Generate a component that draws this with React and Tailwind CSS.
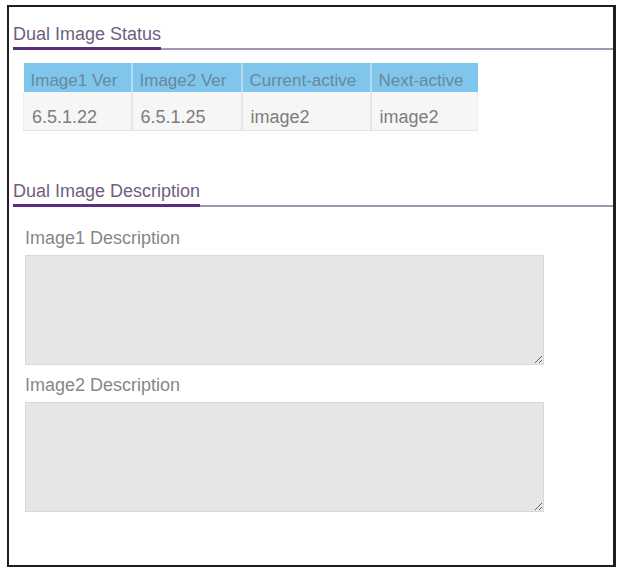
import React from 'react';

const font = { fontFamily: '"Liberation Sans", Arial, sans-serif' };

function SectionTitle({ title, className }) {
  return (
    <div className={`ml-[4px] flex border-b-2 border-[#a396b0] ${className}`}>
      <span className="-mb-[2px] border-b-[3px] border-[#5a2d80] pb-[3px] text-[18px] leading-[20px] text-[#6f6080]">
        {title}
      </span>
    </div>
  );
}

function Description({ label, className }) {
  return (
    <div className={className}>
      <p className="ml-[16px] text-[18px] leading-[20px] text-[#878787]">{label}</p>
      <textarea
        className="ml-[16px] mt-[7px] block h-[110px] w-[519px] border border-[#d9d9d9] bg-[#e6e6e6] outline-none"
        defaultValue=""
      />
    </div>
  );
}

export default function App() {
  const cols = [
    { head: 'Image1 Ver', value: '6.5.1.22', w: 'w-[108px]' },
    { head: 'Image2 Ver', value: '6.5.1.25', w: 'w-[110px]' },
    { head: 'Current-active', value: 'image2', w: 'w-[129px]' },
    { head: 'Next-active', value: 'image2', w: 'w-[107px]' },
  ];

  return (
    <div className="h-[571px] w-[618px] bg-white pl-[7px] pt-[5px]" style={font}>
      <div className="h-[562px] w-[609px] border-2 border-r-[3px] border-[#1e1e1e] bg-white">
        <SectionTitle title="Dual Image Status" className="mt-[17px]" />

        <table className="ml-[14px] mt-[13px] w-[454px] table-fixed border-collapse text-[17px] leading-[20px]">
          <thead>
            <tr className="h-[29px] bg-[#80c6ec]">
              {cols.map((c, i) => (
                <th
                  key={c.head}
                  className={`${c.w} whitespace-nowrap px-[7px] pt-[6px] text-left font-normal text-[#6a879c] ${i > 0 ? 'border-l-2 border-[#b3dcf2]' : ''}`}
                >
                  {c.head}
                </th>
              ))}
            </tr>
          </thead>
          <tbody>
            <tr className="h-[38px] bg-[#f6f6f6]">
              {cols.map((c, i) => (
                <td
                  key={c.head}
                  className={`whitespace-nowrap px-[8px] pt-[12px] text-[18px] text-[#7d7d7d] border-b border-[#e4e4e4] ${i > 0 ? 'border-l-2 border-l-[#e6e6e6]' : 'border-l border-l-[#ececec]'} ${i === 3 ? 'border-r border-r-[#ececec]' : ''}`}
                >
                  {c.value}
                </td>
              ))}
            </tr>
          </tbody>
        </table>

        <SectionTitle title="Dual Image Description" className="mt-[50px]" />

        <Description label="Image1 Description" className="mt-[21px]" />
        <Description label="Image2 Description" className="mt-[10px]" />
      </div>
    </div>
  );
}
